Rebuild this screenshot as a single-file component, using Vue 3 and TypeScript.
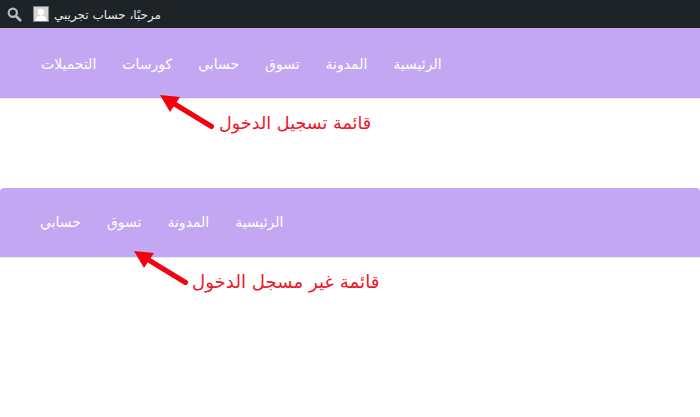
<script setup lang="ts">
const loggedIn: string[] = ['الرئيسية', 'المدونة', 'تسوق', 'حسابي', 'كورسات', 'التحميلات']
const guest: string[] = ['الرئيسية', 'المدونة', 'تسوق', 'حسابي']
</script>

<template>
  <div class="page">
    <header class="adminbar">
      <svg class="search" width="15" height="15" viewBox="0 0 15 15" aria-hidden="true">
        <circle cx="5.8" cy="5.8" r="4.1" fill="none" stroke="#b4bbc0" stroke-width="2.2" />
        <path d="M8.9 8.9 L13.2 13.2" stroke="#b4bbc0" stroke-width="2.8" stroke-linecap="round" />
      </svg>
      <div class="avatar">
        <svg width="14" height="14" viewBox="0 0 14 14" aria-hidden="true">
          <rect width="14" height="14" fill="#d5d5d5" />
          <circle cx="7" cy="5" r="3.2" fill="#fff" />
          <path d="M1.5 14 C2 9.5 4.5 8.5 7 8.5 C9.5 8.5 12 9.5 12.5 14 Z" fill="#fff" />
        </svg>
      </div>
      <span class="greeting" dir="rtl">مرحبًا، حساب تجريبي</span>
    </header>

    <nav class="menu menu-a">
      <a v-for="item in loggedIn" :key="item" class="item">{{ item }}</a>
    </nav>
    <section class="note note-a">
      <p class="caption" dir="rtl">قائمة تسجيل الدخول</p>
      <svg class="arrow arrow-a" width="56" height="36" viewBox="0 0 56 36" aria-hidden="true">
        <path d="M51.5 31.5 L13 8" stroke="#f4000f" stroke-width="5" stroke-linecap="round" />
        <path d="M0 0 L20 2 L10 17 Z" fill="#f4000f" />
      </svg>
    </section>

    <nav class="menu menu-b">
      <a v-for="item in guest" :key="item" class="item">{{ item }}</a>
    </nav>
    <section class="note note-b">
      <p class="caption" dir="rtl">قائمة غير مسجل الدخول</p>
      <svg class="arrow arrow-b" width="56" height="36" viewBox="0 0 56 36" aria-hidden="true">
        <path d="M51.5 31.5 L13 8" stroke="#f4000f" stroke-width="5" stroke-linecap="round" />
        <path d="M0 0 L20 2 L10 17 Z" fill="#f4000f" />
      </svg>
    </section>
  </div>
</template>

<style>
html, body { background: #fff; }
</style>

<style scoped>
.page {
  width: 700px;
  height: 417px;
  overflow: hidden;
  background: #fff;
  font-family: "DejaVu Sans", "Liberation Sans", sans-serif;
}
.adminbar {
  height: 28px;
  background: #1d2327;
  display: flex;
  align-items: center;
  padding-left: 7px;
  box-sizing: border-box;
}
.search { flex: none; }
.avatar {
  width: 16px;
  height: 16px;
  margin-left: 11px;
  border: 1px solid #7d8184;
  box-sizing: border-box;
  flex: none;
  display: flex;
}
.greeting {
  margin-left: 5px;
  padding-top: 3px;
  color: #e6e8e9;
  font-size: 12px;
  line-height: 25px;
}
.menu {
  background: #c4a7f2;
  display: flex;
  flex-direction: row-reverse;
  justify-content: flex-end;
  align-items: center;
  color: #fff;
  font-size: 14px;
  font-weight: 400;
  box-sizing: border-box;
}
.item { white-space: nowrap; }
.menu-a {
  height: 70px;
  padding: 2px 0 0 41px;
  gap: 26px;
  box-shadow: 0 1px 0 #e8e8ee;
}
.menu-b {
  height: 69px;
  padding: 0 0 1px 40px;
  gap: 26px;
  border-radius: 4px 4px 0 0;
  box-shadow: 0 1px 0 #e8e8ee;
}
.note { position: relative; }
.note-a { height: 90px; padding-left: 219px; }
.note-b { height: 160px; padding-left: 192px; }
.caption {
  margin: 0;
  color: #f0162a;
  line-height: 28px;
  white-space: nowrap;
  display: inline-block;
}
.note-a .caption { margin-top: 11px; font-size: 17.6px; }
.note-b .caption { margin-top: 11px; font-size: 18.2px; }
.arrow { position: absolute; }
.arrow-a { left: 159.5px; top: -3px; }
.arrow-b { left: 134px; top: -6px; }
</style>
